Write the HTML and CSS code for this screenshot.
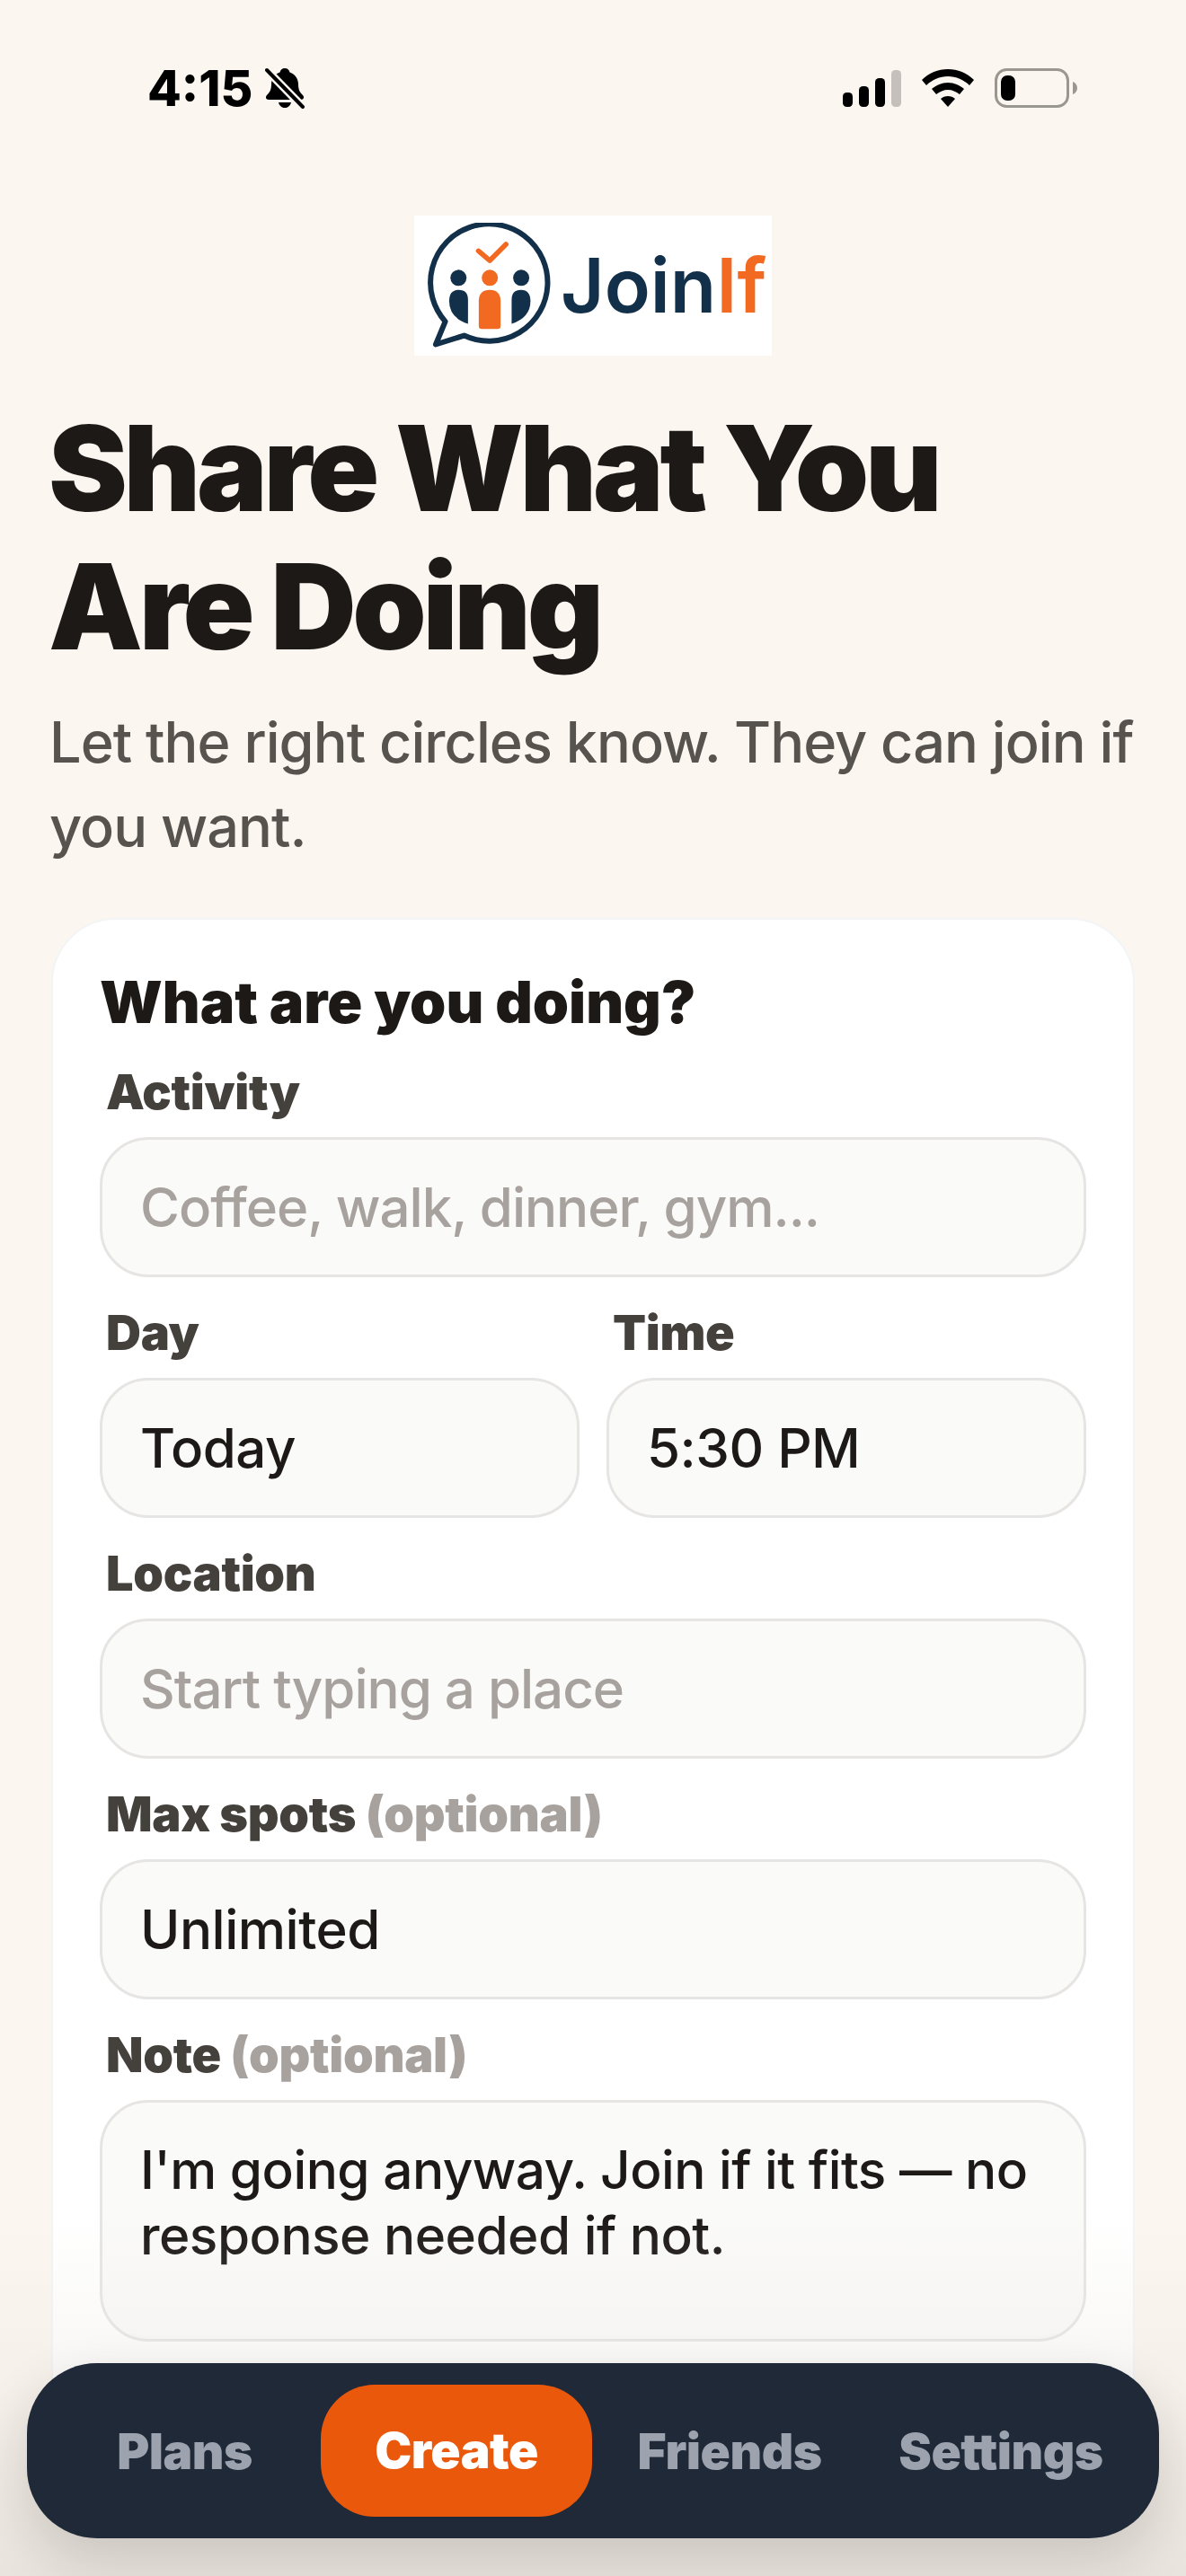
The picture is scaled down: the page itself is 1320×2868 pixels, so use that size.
FILE: index.html
```html
<!doctype html>
<html>
<head>
<meta charset="UTF-8">
<title>JoinIf - Create</title>
	<link rel="stylesheet" href="styles.css">
</head>

<body>
	<div class="status">
		<div class="status-left">
			<span class="clock">4:15</span>
			<svg class="bell" viewBox="0 0 44 46" width="44" height="46">
				<path d="M22 1c3 0 5 2 5.500 4.500C34 8 37 13 37 19c0 6 2 9 5 12 2 2 1 5-2 5H4c-3 0-4-3-2-5 3-3 5-6 5-12 0-6 3-11 9.500-13.500C17 3 19 1 22 1z" fill="#000"/>
				<path d="M15 39h14c-1 4-4 6-7 6s-6-2-7-6z" fill="#000"/>
				<path d="M1 2l41 42" stroke="#fbf6f0" stroke-width="9" fill="none"/>
				<path d="M2 3l40 41" stroke="#000" stroke-width="4" stroke-linecap="round" fill="none"/>
			</svg>
		</div>
		<div class="status-right">
			<svg class="signal" viewBox="0 0 65 41" width="65" height="41">
				<rect x="0" y="25" width="11" height="16" rx="4.500" fill="#000"/>
				<rect x="18" y="18" width="11" height="23" rx="4.500" fill="#000"/>
				<rect x="36" y="9" width="11" height="32" rx="4.500" fill="#000"/>
				<rect x="54" y="0" width="11" height="41" rx="4.500" fill="#c4c1bc"/>
			</svg>
			<svg class="wifi" viewBox="0 0 58 42" width="58" height="42">
				<path d="M29 0c11 0 21 4 29 12l-5 6c-6-6-15-10-24-10S11 12 5 18l-5-6C8 4 18 0 29 0z" fill="#000"/>
				<path d="M29 15c7 0 13 3 18 7l-5 6c-4-3-8-5-13-5s-9 2-13 5l-5-6c5-4 11-7 18-7z" fill="#000"/>
				<path d="M29 30c3 0 6 1 8 3l-8 9-8-9c2-2 5-3 8-3z" fill="#000"/>
			</svg>
			<svg class="battery" viewBox="0 0 93 44" width="93" height="44">
				<rect x="1.500" y="1.500" width="80" height="41" rx="12" fill="none" stroke="#9a9791" stroke-width="3"/>
				<rect x="7" y="8" width="16" height="28" rx="7" fill="#000"/>
				<path d="M87 15c3 1 5 4 5 7s-2 6-5 7z" fill="#9a9791"/>
			</svg>
		</div>
	</div>

	<div class="logo-wrap">
		<div class="logo">
			<svg class="logo-mark" viewBox="100 78 430 420" width="143" height="140">
				<path d="M165 408L133 485L228 455A196 196 0 1 0 165 408Z" fill="none" stroke="#12304a" stroke-width="18" stroke-linejoin="round"/>
				<path d="M276 172L314 204L368 150" fill="none" stroke="#f26a21" stroke-width="17" stroke-linecap="round" stroke-linejoin="round"/>
				<circle cx="209" cy="262" r="27" fill="#12304a"/>
				<circle cx="314" cy="262" r="27" fill="#f26a21"/>
				<circle cx="419" cy="262" r="27" fill="#12304a"/>
				<path d="M210 302Q241 302 241 335L241 416Q178 395 178 340Q178 302 210 302Z" fill="#12304a"/>
				<path d="M418 302Q387 302 387 335L387 416Q450 395 450 340Q450 302 418 302Z" fill="#12304a"/>
				<path d="M314 302Q350 302 350 340L350 423Q350 433 340 433L287 433Q277 433 277 423L277 340Q277 302 314 302Z" fill="#f26a21"/>
			</svg>
			<span class="wordmark">Join<span class="wordmark-if">If</span></span>
		</div>
	</div>

	<h1>Share What You Are Doing</h1>
	<p class="sub">Let the right circles know. They can join if you want.</p>

	<div class="card">
		<h2>What are you doing?</h2>

		<div class="label">Activity</div>
		<div class="field placeholder">Coffee, walk, dinner, gym...</div>

		<div class="two-col">
			<div>
				<div class="label">Day</div>
				<div class="field">Today</div>
			</div>
			<div>
				<div class="label">Time</div>
				<div class="field">5:30 PM</div>
			</div>
		</div>

		<div class="label">Location</div>
		<div class="field placeholder">Start typing a place</div>

		<div class="label">Max spots <span class="optional">(optional)</span></div>
		<div class="field">Unlimited</div>

		<div class="label">Note <span class="optional">(optional)</span></div>
		<div class="field note">I'm going anyway. Join if it fits — no response needed if not.</div>
	</div>

	<div class="fade"></div>

	<div class="nav">
		<div class="nav-item nav-plans">Plans</div>
		<div class="nav-item nav-create">Create</div>
		<div class="nav-item nav-friends">Friends</div>
		<div class="nav-item nav-settings">Settings</div>
	</div>
</body>
</html>
```

FILE: styles.css
```css
html, body {
	margin: 0;
	height: 2868px;
	overflow: hidden;
}

body {
	position: relative;
	background-color: #FBF6F0;
	font-family: Inter, "Liberation Sans", sans-serif;
	color: #1C1917;
}

.status {
	display: flex;
	justify-content: space-between;
	align-items: center;
	height: 46px;
	padding: 75px 120px 0 164px;
}

.status-left, .status-right {
	display: flex;
	align-items: center;
}

.status-left {
	gap: 14px;
}

.status-right {
	gap: 23px;
}

.clock {
	font-size: 55px;
	font-weight: 800;
	line-height: 46px;
	color: #000000;
}

.logo-wrap {
	display: flex;
	justify-content: center;
	margin-top: 119px;
}

.logo {
	display: flex;
	align-items: center;
	width: 385px;
	height: 156px;
	padding-left: 13px;
	background-color: #FFFFFF;
}

.logo-mark {
	flex: none;
}

.wordmark {
	margin-left: 7px;
	font-family: Inter, sans-serif;
	font-size: 84px;
	font-weight: 600;
	line-height: 1;
	color: #12304A;
}

.wordmark-if {
	color: #F26A21;
}

h1 {
	margin: 48px 57px 0 54px;
	font-size: 132px;
	font-weight: 900;
	line-height: 154px;
	letter-spacing: -4.300px;
}

.sub {
	margin: 27px 57px 0 55px;
	font-size: 63px;
	font-weight: 500;
	line-height: 94px;
	letter-spacing: -0.950px;
	color: #57534E;
}

.card {
	margin: 55px 57px 0;
	padding: 56px 52px 54px;
	height: 1800px;
	background-color: #FFFFFF;
	border: 2px solid #F3F4F6;
	border-radius: 72px;
	box-sizing: border-box;
}

h2 {
	margin: 0 0 14px;
	font-size: 64.500px;
	font-weight: 900;
	line-height: 72px;
}

.label {
	margin-top: 12px;
	padding: 0 7px;
	height: 100px;
	line-height: 100px;
	font-size: 54px;
	font-weight: 900;
	letter-spacing: -0.300px;
	color: #44403C;
}

.optional {
	color: #A8A29E;
}

.field {
	box-sizing: border-box;
	height: 156px;
	padding: 0 42px;
	line-height: 150px;
	font-size: 60px;
	font-weight: 500;
	letter-spacing: -0.500px;
	background-color: #FAFAF9;
	border: 3px solid #E7E5E4;
	border-radius: 54px;
	color: #1C1917;
}

.placeholder {
	letter-spacing: -1px;
	color: #A8A29E;
}

.note {
	height: 269px;
	padding-top: 38px;
	font-size: 58.500px;
	letter-spacing: -0.500px;
	line-height: 73px;
}

.two-col {
	display: grid;
	grid-template-columns: 1fr 1fr;
	gap: 30px;
}

.fade {
	position: absolute;
	left: 0;
	right: 0;
	bottom: 0;
	height: 400px;
	background: linear-gradient(to bottom, rgba(231, 226, 219, 0), rgba(231, 226, 219, 0.3) 50%, rgba(231, 226, 219, 0.9) 100%);
}

.nav {
	position: absolute;
	left: 30px;
	right: 30px;
	top: 2631px;
	height: 195px;
	display: flex;
	align-items: center;
	padding: 0 24px;
	box-sizing: border-box;
	background-color: #1F2937;
	border-radius: 78px;
	box-shadow: 0 24px 60px rgba(28, 25, 23, 0.16);
}

.nav-item {
	font-size: 55px;
	font-weight: 900;
	letter-spacing: -0.500px;
	color: #9CA3AF;
	text-align: center;
}

.nav-plans {
	width: 303px;
}

.nav-create {
	width: 302px;
	height: 147px;
	line-height: 147px;
	background-color: #EA580C;
	border-radius: 60px;
	color: #FFFFFF;
}

.nav-friends {
	width: 306px;
}

.nav-settings {
	width: 298px;
}
```
